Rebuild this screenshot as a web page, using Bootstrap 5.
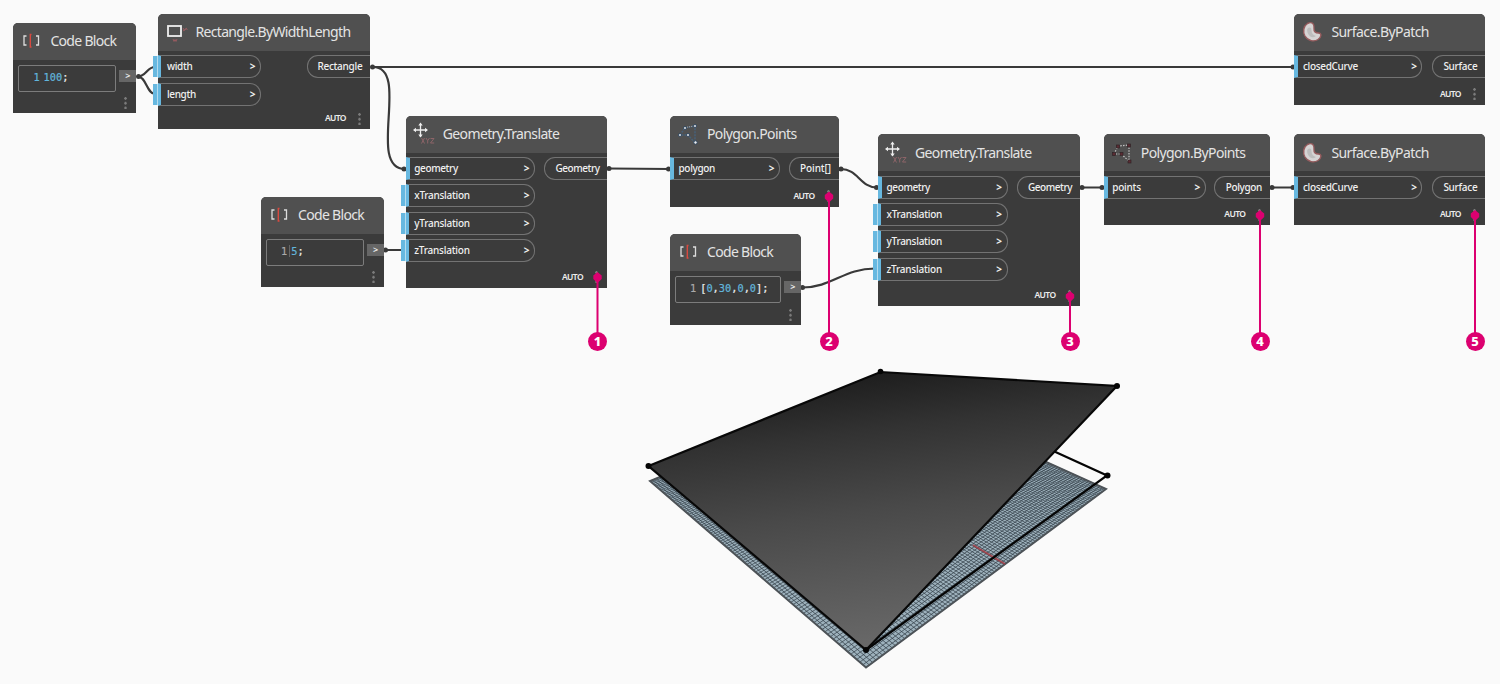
<!DOCTYPE html>
<html lang="en">
<head>
<meta charset="utf-8">
<title>Node graph</title>
<meta name="viewport" content="width=device-width, initial-scale=1">
<link href="https://cdn.jsdelivr.net/npm/bootstrap@5.3.0/dist/css/bootstrap.min.css" rel="stylesheet">
<style>
  body { background: #fafafa; font-family: "Noto Sans", "Open Sans", sans-serif; }
  .graph { width: 1500px; height: 684px; }
  .layer { left: 0; top: 0; width: 1500px; height: 684px; }
  .node { background: #3b3b3b; border-radius: 5px 5px 0 0; color: #eee; }
  .node-head { background: #505050; height: 37px; border-radius: 5px 5px 0 0; flex: none; }
  .node-head svg { flex: none; width: 24px; height: 24px; }
  .node-title { font-size: 14px; line-height: 18px; color: #e4e4e4; }
  .node-ports { padding-top: 4.5px; }
  .ins { gap: 4.4px; }
  .port { height: 23px; font-size: 10px; line-height: 20px; font-weight: 500; border: 1px solid #737373; color: #f0f0f0; }
  .port-in { border-left: 4px solid #67b8e0; border-radius: 0 11px 11px 0; padding: 0 4.5px 0 4.5px; position: relative; }
  .port-in .arrow { font-weight: 700; }
  .port-out { border-right: 0; border-radius: 11px 0 0 11px; padding-right: 8px; }
  .port-in.open { border-left-width: 3px; padding-left: 5.5px; }
  .port-in.open::before { content: ""; position: absolute; left: -8px; top: 0; width: 4px; height: 21px; background: #67b8e0; }
  .port-in.open::after { content: ""; position: absolute; left: -4px; top: 0; width: 1px; height: 21px; background: #b5dcef; }
  .auto { font-size: 8.5px; font-weight: 600; line-height: 12px; }
  .node-foot { padding: 0 9px 4.500px 0; gap: 12.5px; }
  .dots { width: 3px; height: 13px; background: radial-gradient(circle, #7b7b7b 1.1px, transparent 1.5px) 0 0 / 3px 4.8px; }
  .code-box { border: 1px solid #7c7c7c; border-radius: 2px; height: 27px; margin: 4.5px 0 0 5px; font: 10.3px/23px "DejaVu Sans Mono", monospace; white-space: pre; color: #eee; -webkit-text-stroke: .2px; }
  .code-box i { font-style: normal; color: #62b5dc; }
  .code-out { width: 17px; height: 12px; background: #666; font-size: 9px; font-weight: 600; line-height: 11px; margin-top: 9.5px; }
  .fit { display: inline-block; white-space: nowrap; }
  .pin { width: 19px; height: 19px; border-radius: 50%; background: #dc0070; color: #fff; font-size: 13px; line-height: 19px; font-weight: 800; text-align: center; }
</style>
</head>
<body>
<svg width="0" height="0" class="position-absolute">
  <defs>
    <symbol id="i-code" viewBox="0 0 24 24"><g fill="none"><path d="M7.500 7h-2.500v9h2.500M17 7h2.500v9h-2.500" stroke="#ddd" stroke-width="1.300"/><path d="M12.500 5.500h-1.200v12.500h1.200" stroke="#d8493f" stroke-width="1.400"/></g></symbol>
    <symbol id="i-rect" viewBox="0 0 24 24"><rect x="4" y="6" width="13" height="10" fill="none" stroke="#eee" stroke-width="1.800"/><path d="M19 8l1.500 2.500 1.500-2 1.500 1.500M19 11l4-3M9 19l1 2.500 1-2 1 2 1-2.500" stroke="#955a5f" fill="none"/></symbol>
    <symbol id="i-move" viewBox="0 0 24 24"><path d="M8.500 2v13M2 8h13" stroke="#eee" stroke-width="1.300"/><path d="M8.500 .5l2.200 3H6.300zM8.500 15.500l2.200-3H6.300zM1 8l3-2.200v4.400zM16 8l-3-2.200v4.400z" fill="#eee"/><g fill="none" stroke="#8d6468" stroke-width="1"><path d="M9.500 16l3 5.500M12.500 16l-3 5.500M14 16l1.700 2.700L17.500 16M15.700 18.700v2.800M18.500 16.500h3.500l-3.500 4.500h3.700"/></g></symbol>
    <symbol id="i-pts" viewBox="0 0 24 24"><path d="M4 13L9 6l10-2v17l-7-8z" fill="none" stroke="#466079" stroke-width="1.500" stroke-dasharray="2 1"/><path d="M9 5.500l9-1.500" stroke="#aaa" stroke-dasharray="1 1"/><g fill="#eee" stroke="#27415c" stroke-width=".9"><circle cx="4" cy="13" r="1.500"/><circle cx="9" cy="6" r="1.500"/><circle cx="19" cy="4" r="1.500"/><circle cx="12" cy="13" r="1.500"/><circle cx="19.500" cy="20.500" r="1.700"/></g></symbol>
    <symbol id="i-bypts" viewBox="0 0 24 24"><path d="M4 13L8 5l11-1v16l-8-7z" fill="none" stroke="#c4c4c4" stroke-width="1.200" stroke-dasharray="1.500 1.300"/><g fill="#5b2b33" stroke="#302326" stroke-width=".7"><rect x="2.500" y="11.500" width="3" height="3"/><rect x="6.500" y="4" width="3" height="3"/><rect x="17.500" y="3" width="3" height="3"/><rect x="10" y="11.500" width="3" height="3"/><rect x="18" y="19" width="3" height="3"/></g></symbol>
    <symbol id="i-patch" viewBox="0 0 24 24"><path d="M7.500 3.500c5-2.500 7 1 6.500 5-.3 3 1.500 4.500 4.500 4.500 3.500 0 3 4-.5 6.500C14 22 8 21 5 16c-2.500-4.500-1.500-10 2.500-12.500z" fill="#d6d4d4" stroke="#965b5d" stroke-width="1.400"/><path d="M8 8c2.500-1.500 3.500 0 3.500 2.500 0 3 2 5 4.500 5.500-3 2.500-6 1-7.500-1.500C7 12 6.500 9.500 8 8z" fill="#bdbdbd"/></symbol>
    <linearGradient id="shade" gradientUnits="userSpaceOnUse" x1="858" y1="368" x2="895" y2="650"><stop offset="0" stop-color="#1b1b1b"/><stop offset=".22" stop-color="#323232"/><stop offset=".5" stop-color="#494949"/><stop offset="1" stop-color="#6a6a6a"/></linearGradient>
  </defs>
</svg>

<main class="graph position-relative overflow-hidden" id="graph">
  <svg class="layer position-absolute" viewBox="0 0 1500 684">
    <polygon points="650,481 866,667.500 1106,489 880,387" fill="#9db1bc"/>
    <path id="grid" fill="none" stroke="#35424b" stroke-width=".75"/>
    <polygon points="650,481 866,667.500 1106,489 880,387" fill="none" stroke="#4d5358" stroke-width="2"/>
    <path d="M973 545l32 19" stroke="#a33a42" stroke-width="2" opacity=".85"/>
    <path d="M1050 449.500L1107 475.500L866 650" fill="none" stroke="#050505" stroke-width="2.200"/>
    <polygon points="648.500,466 880.500,372 1117,386 866,650" fill="url(#shade)" stroke="#080808" stroke-width="2.200"/>
    <g fill="#050505"><circle cx="648.500" cy="466" r="3"/><circle cx="880.500" cy="371.500" r="2.800"/><circle cx="1117" cy="386" r="3"/><circle cx="1107.500" cy="475.500" r="3"/><circle cx="866" cy="650" r="3"/></g>
  </svg>

  <svg class="layer position-absolute" viewBox="0 0 1500 684" fill="none" stroke="#393939" stroke-width="2.200">
    <path d="M138 76.500C146 76.500 147 67 155 67M138 76.500C146 76.500 147 94 155 94M373 67H1294M373 67C411 67 366 169 405 169M384 250h19M609 168.500L670 169M841 169C858 169 860 187.500 877 187.500M802 287.500C832 287.500 844 268.500 875 268.500M1082 187.500h21M1272 187.500h22"/>
    <g fill="#393939" stroke="none"><circle cx="138.500" cy="76.500" r="2.500"/><circle cx="372.500" cy="67" r="2.500"/><circle cx="385.500" cy="250" r="2.500"/><circle cx="404" cy="169" r="2.500"/><circle cx="609" cy="168.500" r="2.500"/><circle cx="668.500" cy="169" r="2.500"/><circle cx="841" cy="169" r="2.500"/><circle cx="876.500" cy="187.500" r="2.500"/><circle cx="802.500" cy="287.500" r="2.500"/><circle cx="1082" cy="187.500" r="2.500"/><circle cx="1102" cy="187.500" r="2.500"/><circle cx="1272" cy="187.500" r="2.500"/><circle cx="1293" cy="187.500" r="2.500"/><circle cx="1293" cy="67" r="2.500"/></g>
  </svg>
</main>

<script src="https://cdn.jsdelivr.net/npm/bootstrap@5.3.0/dist/js/bootstrap.bundle.min.js"></script>
<script>
const graph = document.getElementById('graph');
const fit = (text, w, cls = '') => `<span class="fit ${cls}" data-w="${w}">${text}</span>`;

// Code block: position, size, title, code markup and the width of its edit box
const codeBlocks = [
  { x: 13.4, y: 23, w: 123, h: 90.4, box: 98, pad: 14, code: '<i>1</i><i style="margin-left:4px">100</i>;' },
  { x: 261, y: 197, w: 123, h: 90.4, box: 98, pad: 14, code: '<span style="color:#aaa;border-right:1px solid #666;padding-right:2px">1</span><i style="margin-left:1px">5</i>;' },
  { x: 670, y: 234, w: 131.3, h: 90.8, box: 106, pad: 14, code: '<span style="color:#aaa">1</span><span style="margin-left:4px">[</span><i>0</i>,<i>30</i>,<i>0</i>,<i>0</i>];' }
];
for (const b of codeBlocks) {
  graph.insertAdjacentHTML('beforeend', `
  <section class="node position-absolute d-flex flex-column" style="left:${b.x}px;top:${b.y}px;width:${b.w}px;height:${b.h}px">
    <header class="node-head d-flex align-items-center" style="padding:0 0 1px 6px;gap:7px"><svg><use href="#i-code"/></svg>${fit('Code Block', 66, 'node-title')}</header>
    <div class="d-flex justify-content-between align-items-start">
      <div class="code-box" style="width:${b.box}px;padding-left:${b.pad}px">${b.code}</div>
      <div class="code-out text-center">&gt;</div>
    </div>
    <div class="node-foot d-flex justify-content-end mt-auto" style="padding-bottom:4px"><span class="dots"></span></div>
  </section>`);
}

// Function nodes: inputs are [label, label width, open]
const tr = [['geometry', 43.5], ['xTranslation', 55.5, 1], ['yTranslation', 55.5, 1], ['zTranslation', 55.5, 1]];
const nodes = [
  { x: 158.4, y: 13.8, w: 212, h: 115.5, lift: 1, icon: 'rect', t: 'Rectangle.ByWidthLength', tw: 155, inW: 102.5, ins: [['width', 25.5, 1], ['length', 29, 1]], out: 'Rectangle', ow: 45, outW: 63.5 },
  { x: 405.8, y: 115.5, w: 201.7, h: 172, icon: 'move', t: 'Geometry.Translate', tw: 116.5, inW: 129.3, ins: tr, out: 'Geometry', ow: 44, outW: 63 },
  { x: 670, y: 115.5, w: 169, h: 91.4, icon: 'pts', t: 'Polygon.Points', tw: 89.5, inW: 110, ins: [['polygon', 36.5]], out: 'Point[]', ow: 31, outW: 50.5 },
  { x: 878, y: 134, w: 202, h: 172, icon: 'move', t: 'Geometry.Translate', tw: 116.5, inW: 129.5, ins: tr, out: 'Geometry', ow: 44, outW: 63 },
  { x: 1103.8, y: 134, w: 166, h: 91.4, icon: 'bypts', t: 'Polygon.ByPoints', tw: 104.5, inW: 102, ins: [['points', 28.5]], out: 'Polygon', ow: 36, outW: 55.5 },
  { x: 1294.4, y: 13.8, w: 191, h: 91, lift: 1, icon: 'patch', t: 'Surface.ByPatch', tw: 97.5, inW: 128, ins: [['closedCurve', 55]], out: 'Surface', ow: 34, outW: 53.5 },
  { x: 1294.4, y: 134, w: 191, h: 91.4, icon: 'patch', t: 'Surface.ByPatch', tw: 97.5, inW: 128, ins: [['closedCurve', 55]], out: 'Surface', ow: 34, outW: 53.5 }
];
for (const n of nodes) {
  graph.insertAdjacentHTML('beforeend', `
  <section class="node position-absolute d-flex flex-column" style="left:${n.x}px;top:${n.y}px;width:${n.w}px;height:${n.h}px">
    <header class="node-head d-flex align-items-center" style="padding:0 0 ${n.lift || 0}px 6px;gap:7px"><svg><use href="#i-${n.icon}"/></svg>${fit(n.t, n.tw, 'node-title')}</header>
    <div class="node-ports d-flex justify-content-between align-items-start">
      <div class="ins d-flex flex-column" style="width:${n.inW}px">${n.ins.map(p => `
        <div class="port port-in d-flex justify-content-between ${p[2] ? 'open' : ''}">${fit(p[0], p[1])}<span class="arrow">&gt;</span></div>`).join('')}
      </div>
      <div class="port port-out text-end" style="width:${n.outW}px">${fit(n.out, n.ow)}</div>
    </div>
    <div class="node-foot d-flex justify-content-end align-items-center mt-auto">${fit('AUTO', 21, 'auto')}<span class="dots"></span></div>
  </section>`);
}

// Numbered call-outs hanging from the node menus
const pins = [[597.5, 277], [829, 196.5], [1070, 296], [1260, 215], [1475, 215]];
graph.insertAdjacentHTML('beforeend', `<svg class="layer position-absolute" viewBox="0 0 1500 684">${pins.map(([x, y]) =>
  `<path d="M${x} ${y}V336" stroke="#dc0070" stroke-width="2"/><path d="M${x} ${y - 5}l4.200 3.500v3.500l-4.200 4-4.200-4v-3.500z" fill="#dc0070"/>`).join('')}</svg>` +
  pins.map(([x], i) => `<div class="pin position-absolute" style="left:${x - 9.5}px;top:332px">${i + 1}</div>`).join(''));

// Letter spacing that gives each label its width
document.querySelectorAll('.fit').forEach(e => {
  const d = (e.dataset.w - e.getBoundingClientRect().width) / e.textContent.length;
  e.style.letterSpacing = d.toFixed(3) + 'px';
});

// Ground grid in perspective: unit square mapped on the plane's four corners
const [a, b, c, d] = [[866, 667.5], [1106, 489], [880, 387], [650, 481]];
const dx1 = b[0] - c[0], dx2 = d[0] - c[0], dx3 = a[0] - b[0] + c[0] - d[0];
const dy1 = b[1] - c[1], dy2 = d[1] - c[1], dy3 = a[1] - b[1] + c[1] - d[1];
const det = dx1 * dy2 - dx2 * dy1, g = (dx3 * dy2 - dx2 * dy3) / det, h = (dx1 * dy3 - dx3 * dy1) / det;
const pt = (u, v) => {
  const k = g * u + h * v + 1;
  return ((b[0] - a[0] + g * b[0]) * u + (d[0] - a[0] + h * d[0]) * v + a[0]) / k + ' ' +
         ((b[1] - a[1] + g * b[1]) * u + (d[1] - a[1] + h * d[1]) * v + a[1]) / k;
};
let path = '';
for (let i = 0; i <= 100; i++) path += `M${pt(i / 100, 0)}L${pt(i / 100, 1)}M${pt(0, i / 100)}L${pt(1, i / 100)}`;
document.getElementById('grid').setAttribute('d', path);
</script>
</body>
</html>
